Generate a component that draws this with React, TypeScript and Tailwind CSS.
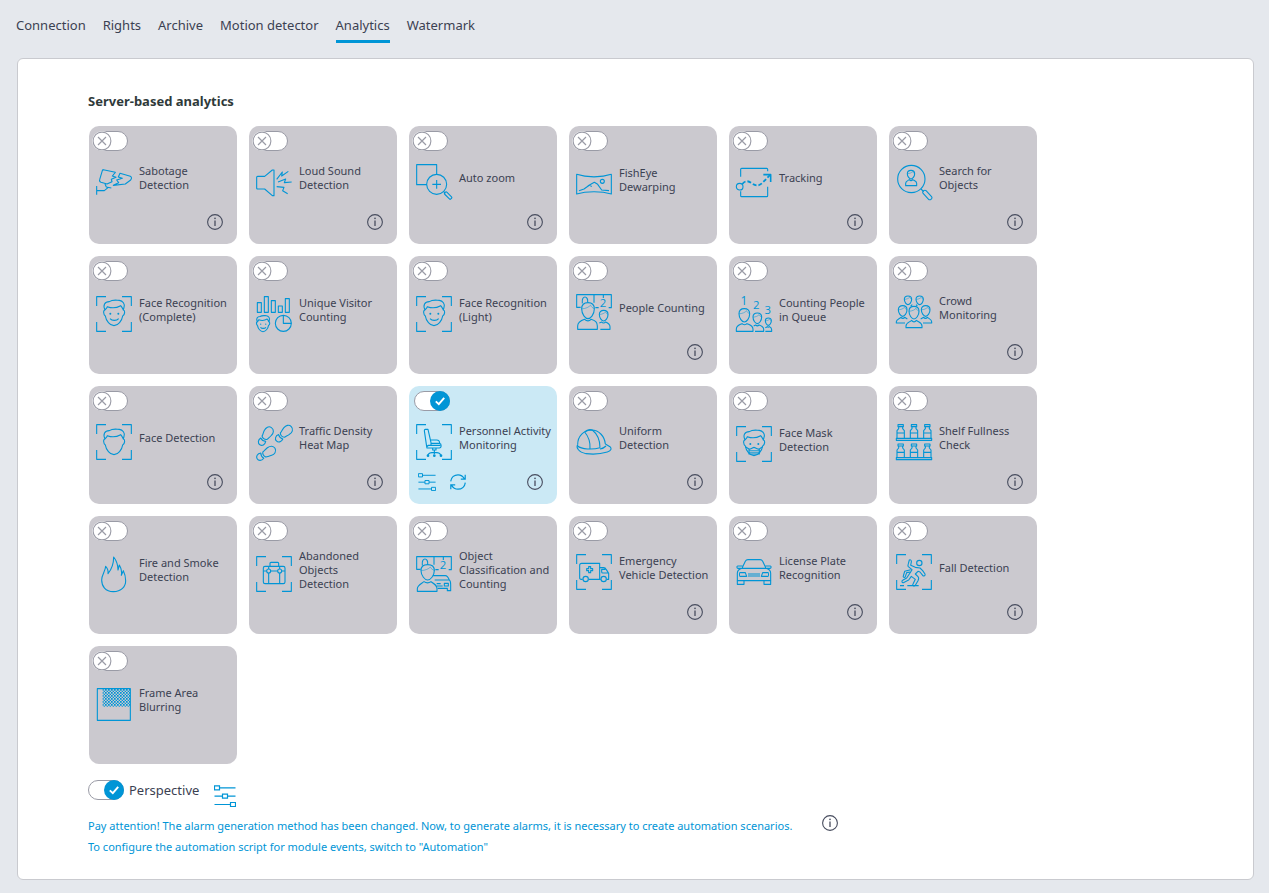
import React, { useState } from 'react';

interface Module {
  id: string;
  title: string;
  icon: React.ReactNode;
  info?: boolean;
}

const TABS = ['Connection', 'Rights', 'Archive', 'Motion detector', 'Analytics', 'Watermark'];

// All module icons are drawn on a 108 x 108 grid
const Icon: React.FC<{ children: React.ReactNode }> = ({ children }) => (
  <svg
    viewBox="0 0 108 108"
    width={36}
    height={36}
    fill="none"
    stroke="#0095d6"
    strokeWidth={1.1}
    strokeLinejoin="round"
    aria-hidden="true"
    className="shrink-0 overflow-visible [&_*]:[vector-effect:non-scaling-stroke]"
  >
    {children}
  </svg>
);

const Corners = () => (
  <path d="M2 30V2H30M78 2H106V30M106 78V106H78M30 106H2V78" />
);

const FaceOutline = () => (
  <>
    <path d="M27 42C20 28 26 17 40 17C50 10 62 13 70 13C80 14 88 24 84 34L82 42C80 38 78 33 74 29C60 37 44 36 34 32C33 36 30 38 27 42Z" />
    <path d="M27 42C21 42 22 56 28 60C30 74 42 89 54 89C66 89 78 74 80 60C87 56 88 43 82 42" />
  </>
);

const Face = () => (
  <>
    <FaceOutline />
    <g fill="#0095d6" stroke="none">
      <circle cx="43" cy="53" r="3" />
      <circle cx="67" cy="53" r="3" />
    </g>
    <path d="M42 68C48 75 62 75 68 68" />
  </>
);

const Head: React.FC<{ x: number; y: number; w: number; h: number }> = ({ x, y, w, h }) => (
  <g transform={`translate(${x} ${y}) scale(${w / 20} ${h / 26})`}>
    <path d="M-10-3C-10-10-6-13 0-13C6-13 10-10 10-3C10 6 4 13 0 13C-4 13-10 6-10-3Z" />
    <path d="M-10-3C-4-3 2-6 4-9C5-6 8-4 10-3" strokeWidth={0.5} />
  </g>
);

const Digit: React.FC<{ x: number; y: number; size: number; children: string }> = ({ x, y, size, children }) => (
  <text x={x} y={y} fontSize={size} textAnchor="middle" fill="#0095d6" stroke="none" fontFamily="Open Sans, sans-serif">
    {children}
  </text>
);

const Scoreboard = () => (
  <>
    <path d="M14 40H2V2H106V41H98M54 2V26M82 2V12M19 28C17 14 22 9 27 9C32 9 36 15 35 24M58 41H68" />
    <Digit x={81} y={39} size={34}>2</Digit>
  </>
);

const Bottle: React.FC<{ x: number; y: number }> = ({ x, y }) => (
  <g transform={`translate(${x} ${y})`}>
    <path d="M4 2H20V8H4ZM6 8V14L1 20V43M18 8V14L23 20V43M1 27H23" />
  </g>
);

const Footprint: React.FC<{ x: number; y: number; angle: number }> = ({ x, y, angle }) => (
  <g transform={`translate(${x} ${y}) rotate(${angle})`}>
    <path d="M0-22C11-22 15-11 13-3C12 5 10 9 9 15C4 19-4 19-9 15C-9 9-12 5-13-3C-14-13-10-22 0-22Z" />
    <path d="M-9 22C-4 25 4 25 9 22C13 32 8 40 0 40C-8 40-13 32-9 22Z" />
  </g>
);

const MODULES: Module[] = [
  {
    id: 'sabotage',
    title: 'Sabotage\nDetection',
    info: true,
    icon: (
      <Icon>
        <path d="M22 17L58 25L49 36L60 40L46 46L48 53L33 60L15 55C10 53 10 50 11 47L19 20C20 18 20 17 22 17Z" />
        <path d="M72 28L103 37C108 40 107 44 104 48L88 60L52 64L68 56L62 48L79 43L67 39Z" />
        <path d="M27 60L31 69L46 72M36 71L25 80H2M2 66V92" />
      </Icon>
    ),
  },
  {
    id: 'sound',
    title: 'Loud Sound\nDetection',
    info: true,
    icon: (
      <Icon>
        <path d="M5 37H26L49 18H54V95H49L26 75H5C3 75 2 74 2 72V40C2 38 3 37 5 37Z" />
        <path d="M62 46L79 24L77 36L97 22M66 54L89 45L85 56L107 54M62 68L84 70L80 80L95 89" />
      </Icon>
    ),
  },
  {
    id: 'zoom',
    title: 'Auto zoom',
    info: true,
    icon: (
      <Icon>
        <path d="M33 62H2V2H62V30" />
        <circle cx="62" cy="61" r="30" />
        <path d="M49 61H75M62 48V74M83 83L88 88" />
        <rect x="83" y="90" width="26" height="9" rx="3" transform="rotate(45 96 95)" />
      </Icon>
    ),
  },
  {
    id: 'fisheye',
    title: 'FishEye\nDewarping',
    icon: (
      <Icon>
        <path d="M2 25C32 35 76 35 106 25V84C76 75 32 75 2 84Z" />
        <path d="M9 74L24 69L41 57L47 62M35 60L55 49L65 55L77 72L99 74" />
        <circle cx="79" cy="46" r="6" />
      </Icon>
    ),
  },
  {
    id: 'tracking',
    title: 'Tracking',
    info: true,
    icon: (
      <Icon>
        <path d="M14 38V16C14 14 15 13 17 13H92C94 13 95 14 95 16V22M14 82V95C14 97 15 98 17 98H92C94 98 95 97 95 95V68" />
        <circle cx="11" cy="68" r="10" />
        <path d="M19 60C28 49 36 50 46 57C60 68 70 66 80 56L102 33" strokeDasharray="4 2" strokeWidth={1.8} />
        <path d="M82 32H104V54" strokeWidth={1.6} />
      </Icon>
    ),
  },
  {
    id: 'search',
    title: 'Search for\nObjects',
    info: true,
    icon: (
      <Icon>
        <circle cx="46" cy="45" r="41" />
        <Head x={45} y={32} w={22} h={26} />
        <path d="M29 65V58C29 51 36 50 40 47C43 51 47 51 50 47C55 50 62 51 62 58V65Z" />
        <path d="M75 75L83 83" />
        <rect x="77" y="87" width="34" height="12" rx="5" transform="rotate(47 94 93)" />
      </Icon>
    ),
  },
  {
    id: 'face-complete',
    title: 'Face Recognition\n(Complete)',
    icon: (
      <Icon>
        <Corners />
        <Face />
      </Icon>
    ),
  },
  {
    id: 'visitors',
    title: 'Unique Visitor\nCounting',
    icon: (
      <Icon>
        <path d="M4 20H16V49H4ZM25 2H37V49H25ZM46 14H58V49H46ZM67 30H79V49H67ZM88 8H100V49H88Z" />
        <g transform="translate(-13 51) scale(0.63)">
          <Face />
        </g>
        <circle cx="82" cy="82" r="24" />
        <path d="M82 58V82H106" />
      </Icon>
    ),
  },
  {
    id: 'face-light',
    title: 'Face Recognition\n(Light)',
    icon: (
      <Icon>
        <Corners />
        <Face />
      </Icon>
    ),
  },
  {
    id: 'people',
    title: 'People Counting',
    info: true,
    icon: (
      <Icon>
        <Scoreboard />
        <Head x={36} y={50} w={38} h={48} />
        <path d="M5 106V96C5 84 14 80 26 76C32 82 40 82 45 76C58 80 64 84 64 96V106Z" />
        <Head x={83} y={65} w={26} h={32} />
        <path d="M73 106H102V98C102 90 96 87 89 84C85 88 80 88 77 84L70 87" />
      </Icon>
    ),
  },
  {
    id: 'queue',
    title: 'Counting People\nin Queue',
    icon: (
      <Icon>
        <Digit x={24} y={27} size={36}>1</Digit>
        <Digit x={61} y={40} size={34}>2</Digit>
        <Digit x={95} y={54} size={34}>3</Digit>
        <Head x={25} y={58} w={32} h={40} />
        <path d="M1 106V100C1 88 10 87 18 83C22 87 29 87 33 83C42 87 51 88 51 100V106Z" />
        <Head x={64} y={67} w={26} h={32} />
        <path d="M57 106H83V100C83 92 77 90 69 87C66 90 62 90 59 87L53 90" />
        <Head x={97} y={77} w={18} h={22} />
        <path d="M88 106H107V101C107 95 104 94 100 92C98 94 96 94 94 92L88 95" />
      </Icon>
    ),
  },
  {
    id: 'crowd',
    title: 'Crowd\nMonitoring',
    info: true,
    icon: (
      <Icon>
        <Head x={36} y={19} w={22} h={26} />
        <Head x={71} y={19} w={22} h={26} />
        <Head x={20} y={51} w={26} h={32} />
        <Head x={89} y={51} w={26} h={32} />
        <Head x={54} y={56} w={30} h={38} />
        <path d="M30 101V96C30 86 40 85 47 79C51 85 57 85 61 79C69 85 78 86 78 96V101Z" />
        <path d="M27 87H1V83C1 76 9 75 15 70C18 74 23 74 26 70L34 75M81 87H107V83C107 76 100 75 94 70C91 74 86 74 83 70L74 75M44 36L49 32M64 36L60 32" />
      </Icon>
    ),
  },
  {
    id: 'face-detection',
    title: 'Face Detection',
    info: true,
    icon: (
      <Icon>
        <Corners />
        <g transform="translate(0 3)">
          <FaceOutline />
        </g>
      </Icon>
    ),
  },
  {
    id: 'traffic',
    title: 'Traffic Density\nHeat Map',
    info: true,
    icon: (
      <Icon>
        <Footprint x={34} y={29} angle={34} />
        <Footprint x={90} y={23} angle={46} />
        <Footprint x={38} y={84} angle={60} />
      </Icon>
    ),
  },
  {
    id: 'personnel',
    title: 'Personnel Activity\nMonitoring',
    info: true,
    icon: (
      <Icon>
        <Corners />
        <path d="M28 16H36L45 56V64H36L32 68L25 20C25 17 26 16 28 16ZM44 48H62C68 48 71 52 71 58H45M71 58C77 59 77 72 70 72H34C32 72 32 70 33 68L38 64H73" />
        <path d="M50 72V78H60V72M55 78V90M36 93C38 86 48 85 55 85C62 85 72 86 74 93" />
        <g fill="#0095d6" stroke="none">
          <circle cx="36" cy="95" r="4" />
          <circle cx="55" cy="95" r="4" />
          <circle cx="75" cy="95" r="4" />
        </g>
      </Icon>
    ),
  },
  {
    id: 'uniform',
    title: 'Uniform\nDetection',
    info: true,
    icon: (
      <Icon>
        <path d="M5 62C5 36 24 19 46 18C70 18 86 38 88 60" />
        <path d="M5 62C0 70 6 84 30 89C54 92 78 89 94 84C106 80 108 74 102 68L88 60" />
        <path d="M5 66C16 76 50 78 72 71M26 24C38 38 43 56 42 74M49 18C64 30 72 46 72 71M26 24C32 18 42 16 49 18M90 66C84 72 78 74 72 75" />
      </Icon>
    ),
  },
  {
    id: 'mask',
    title: 'Face Mask\nDetection',
    icon: (
      <Icon>
        <Corners />
        <FaceOutline />
        <g fill="#0095d6" stroke="none">
          <circle cx="43" cy="54" r="3" />
          <circle cx="67" cy="54" r="3" />
        </g>
        <path d="M28 62L39 69M80 62L70 69M39 69C46 71 50 64 54 64C58 64 62 71 70 69V84H39Z" />
        <path d="M39 74H70M39 79H70" strokeWidth={0.8} />
      </Icon>
    ),
  },
  {
    id: 'shelf',
    title: 'Shelf Fullness\nCheck',
    info: true,
    icon: (
      <Icon>
        <Bottle x={2} y={0} />
        <Bottle x={42} y={0} />
        <Bottle x={82} y={0} />
        <path d="M1 43H107V49H1Z" />
        <Bottle x={2} y={58} />
        <Bottle x={42} y={58} />
        <Bottle x={82} y={58} />
        <path d="M1 101H107V107H1Z" />
      </Icon>
    ),
  },
  {
    id: 'fire',
    title: 'Fire and Smoke\nDetection',
    icon: (
      <Icon>
        <path d="M52 107C28 107 17 90 17 72C17 56 28 46 29 31C35 37 37 45 36 53C45 42 53 24 53 3C60 12 66 28 66 42L70 27C75 36 78 48 76 58L82 44C87 54 89 64 89 74C89 92 76 107 52 107Z" />
      </Icon>
    ),
  },
  {
    id: 'abandoned',
    title: 'Abandoned\nObjects\nDetection',
    icon: (
      <Icon>
        <Corners />
        <rect x="22" y="31" width="65" height="52" rx="5" />
        <path d="M42 31V22C42 20 43 19 45 19H65C67 19 68 20 68 22V31M22 45H32M44 45H65M77 45H87M38 31V39M71 31V39M38 51V83M71 51V83" />
        <circle cx="38" cy="45" r="6" />
        <circle cx="71" cy="45" r="6" />
      </Icon>
    ),
  },
  {
    id: 'classification',
    title: 'Object\nClassification and\nCounting',
    icon: (
      <Icon>
        <Scoreboard />
        <Head x={35} y={49} w={40} h={46} />
        <path d="M4 106V98C4 88 14 84 24 77C31 82 38 82 45 77C56 84 63 88 63 98V106Z" />
        <path d="M51 59H88C94 59 96 62 100 72H56M100 72C104 74 104 80 104 86V104H94V97H65M62 83H74M62 90H80" />
        <path d="M85 82H97V90H85Z" />
      </Icon>
    ),
  },
  {
    id: 'emergency',
    title: 'Emergency\nVehicle Detection',
    info: true,
    icon: (
      <Icon>
        <Corners />
        <path d="M20 76H16C12 76 11 74 11 71V34C11 30 13 28 17 28H71V76H38" />
        <path d="M71 41H83C87 41 89 43 91 47L98 58V76H92M74 76H71M96 57H80C77 57 77 55 77 53V46H88" />
        <path d="M38 38H44V44H50V50H44V56H38V50H32V44H38Z" />
        <circle cx="29" cy="75" r="8" />
        <circle cx="83" cy="75" r="8" />
      </Icon>
    ),
  },
  {
    id: 'plate',
    title: 'License Plate\nRecognition',
    info: true,
    icon: (
      <Icon>
        <path d="M18 43L28 22C30 18 32 17 36 17H72C76 17 78 18 80 22L90 43M18 43H90C98 45 104 50 104 58V80H4V58C4 50 10 45 18 43" />
        <path d="M20 36H5C2 36 2 42 5 43H15M88 36H103C106 36 106 42 103 43H93M4 80V91H24V80M84 80V91H104V80M36 60H72M36 66H72" />
        <path d="M12 56H28L32 67H12C10 67 10 56 12 56ZM96 56H80L76 67H96C98 67 98 56 96 56Z" />
      </Icon>
    ),
  },
  {
    id: 'fall',
    title: 'Fall Detection',
    info: true,
    icon: (
      <Icon>
        <Corners />
        <circle cx="70" cy="27" r="8" />
        <path d="M40 18C44 16 47 20 46 24L44 34L58 40L72 42L80 50L87 60C89 65 83 68 80 64L72 54L66 52L58 60L66 68C70 72 68 76 66 80L58 94C54 98 48 94 51 90L58 76L46 67L38 78L22 86C18 87 16 81 20 79L32 72L44 54L48 47L37 38C35 36 36 32 37 29Z" />
        <path d="M44 54L32 56L28 68C26 72 20 70 22 66L26 52L44 47M12 95H24M34 95H68" />
      </Icon>
    ),
  },
  {
    id: 'blurring',
    title: 'Frame Area\nBlurring',
    icon: (
      <Icon>
        <defs>
          <pattern id="checker" width="9" height="9" x="18" y="9" patternUnits="userSpaceOnUse">
            <path d="M0 0H5V5H0ZM5 5H9V9H5Z" fill="#0095d6" stroke="none" />
          </pattern>
        </defs>
        <path d="M4 8H103V103H4Z" />
        <path d="M20 8H103V62H20Z" fill="url(#checker)" stroke="none" />
      </Icon>
    ),
  },
];

const InfoButton = () => (
  <button type="button" aria-label="Information" className="block cursor-pointer">
    <svg viewBox="0 0 16 16" width={16} height={16} fill="none" stroke="#474c5e" aria-hidden="true">
      <circle cx="8" cy="8" r="7.4" strokeWidth={1.1} />
      <path d="M8 6.6V12" strokeWidth={1.3} />
      <circle cx="8" cy="4.4" r="0.8" fill="#474c5e" stroke="none" />
    </svg>
  </button>
);

const SettingsButton: React.FC<{ size: number; label: string }> = ({ size, label }) => (
  <button type="button" aria-label={label} className="block cursor-pointer">
    <svg viewBox="0 0 22 22" width={size} height={size} fill="none" stroke="#0095d6" strokeWidth={1.2} aria-hidden="true">
      <path d="M.5 .8H5.5V4.8H.5ZM5.5 2.8H21.5M.5 11.2H8.5M8.5 9.2H13.5V13.2H8.5ZM13.5 11.2H21.5M.5 19.5H16.5M16.5 17.5H21.5V21.5H16.5Z" />
    </svg>
  </button>
);

const RefreshButton = () => (
  <button type="button" aria-label="Restart module" className="block cursor-pointer">
    <svg viewBox="0 0 16 16" width={16} height={16} fill="none" stroke="#0095d6" strokeWidth={1.2} aria-hidden="true">
      <path d="M.7 7.4C1.2 3.2 4.4 .8 8 .8C10.8 .8 13 2.2 14.4 4.8M15.2 .8V5.2H10.8M15.3 8.6C14.8 12.8 11.6 15.2 8 15.2C5.2 15.2 3 13.8 1.6 11.2M.8 15.2V10.8H5.2" />
    </svg>
  </button>
);

const Toggle: React.FC<{ id: string; checked: boolean; onChange: () => void }> = ({ id, checked, onChange }) => (
  <span className="relative block h-5 w-9 shrink-0">
    <input
      id={id}
      type="checkbox"
      checked={checked}
      onChange={onChange}
      className="block h-5 w-9 cursor-pointer appearance-none rounded-full border border-[#9a9ba6] bg-white"
    />
    {checked ? (
      <svg viewBox="0 0 20 20" className="pointer-events-none absolute top-0 right-0 size-5" aria-hidden="true">
        <circle cx="10" cy="10" r="10" fill="#0095d6" />
        <path d="M5.8 10.4L8.8 13.2L14.2 6.8" fill="none" stroke="#fff" strokeWidth={1.9} />
      </svg>
    ) : (
      <svg viewBox="0 0 20 20" className="pointer-events-none absolute top-0 left-0 size-5" aria-hidden="true">
        <circle cx="10" cy="10" r="10" fill="#fff" />
        <circle cx="10" cy="10" r="8.9" fill="#fff" stroke="#9a9ba6" strokeWidth={1.1} />
        <path d="M6 6L14 14M14 6L6 14" stroke="#9a9ba6" strokeWidth={1.2} />
      </svg>
    )}
  </span>
);

const ModuleCard: React.FC<{ module: Module; active: boolean; onToggle: () => void }> = ({ module, active, onToggle }) => (
  <div className={`flex h-[118px] w-[148px] flex-col rounded-[10px] ${active ? 'bg-[#cbe9f5]' : 'bg-[#cbc9cf]'}`}>
    <div className={`flex h-[26px] pt-[5px] ${active ? 'pl-[5px]' : 'pl-[3px]'}`}>
      <Toggle id={module.id} checked={active} onChange={onToggle} />
    </div>
    <div className={`flex items-center gap-[7px] pl-[7px] ${module.info ? 'h-[60px]' : 'h-[64px]'}`}>
      {module.icon}
      <label htmlFor={module.id} className="cursor-pointer pb-2 text-[11px] leading-[14px] whitespace-pre">
        {module.title}
      </label>
    </div>
    {module.info && (
      <div className="flex h-[20px] items-center gap-[14px] pr-[14px] pl-[9px]">
        {active && (
          <>
            <SettingsButton size={18} label="Module settings" />
            <RefreshButton />
          </>
        )}
        <div className="ml-auto">
          <InfoButton />
        </div>
      </div>
    )}
  </div>
);

export default function App() {
  const [tab, setTab] = useState('Analytics');
  const [enabled, setEnabled] = useState<string[]>(['personnel']);
  const [perspective, setPerspective] = useState(true);

  const toggle = (id: string) =>
    setEnabled(prev => (prev.includes(id) ? prev.filter(x => x !== id) : [...prev, id]));

  return (
    <div className="min-h-screen bg-[#e5e8ed] font-['Noto_Sans','Open_Sans',sans-serif] text-[#3b4152]">
      <nav className="flex gap-[17px] px-4 pt-[10px] text-[13px] leading-[30px]">
        {TABS.map(name => (
          <button
            key={name}
            type="button"
            onClick={() => setTab(name)}
            className={`cursor-pointer border-b-3 ${tab === name ? 'border-[#0095d6]' : 'border-transparent'}`}
          >
            {name}
          </button>
        ))}
      </nav>

      <main className="mt-[15px] mr-[15px] ml-[17px] rounded-md border border-[#c9cacf] bg-white px-[70px] pt-8 pb-6">
        <h2 className="text-[13px] leading-5 font-bold text-[#2f3a3a]">Server-based analytics</h2>
        <div className="mt-[15px] ml-px flex max-w-[960px] flex-wrap gap-3">
          {MODULES.map(module => (
            <ModuleCard
              key={module.id}
              module={module}
              active={enabled.includes(module.id)}
              onToggle={() => toggle(module.id)}
            />
          ))}
        </div>

        <div className="mt-4 flex items-start gap-[5px]">
          <Toggle id="perspective" checked={perspective} onChange={() => setPerspective(!perspective)} />
          <label htmlFor="perspective" className="cursor-pointer text-[13px] leading-5">Perspective</label>
          <div className="pt-[5px] pl-[10px]">
            <SettingsButton size={22} label="Perspective settings" />
          </div>
        </div>

        <div className="mt-2 flex items-start gap-[30px] text-[11px] text-[#0095d6]">
          <div className="grid gap-[5px] pt-[3px] leading-4">
            <p>Pay attention! The alarm generation method has been changed. Now, to generate alarms, it is necessary to create automation scenarios.</p>
            <p>To configure the automation script for module events, switch to "Automation"</p>
          </div>
          <InfoButton />
        </div>
      </main>
    </div>
  );
}
